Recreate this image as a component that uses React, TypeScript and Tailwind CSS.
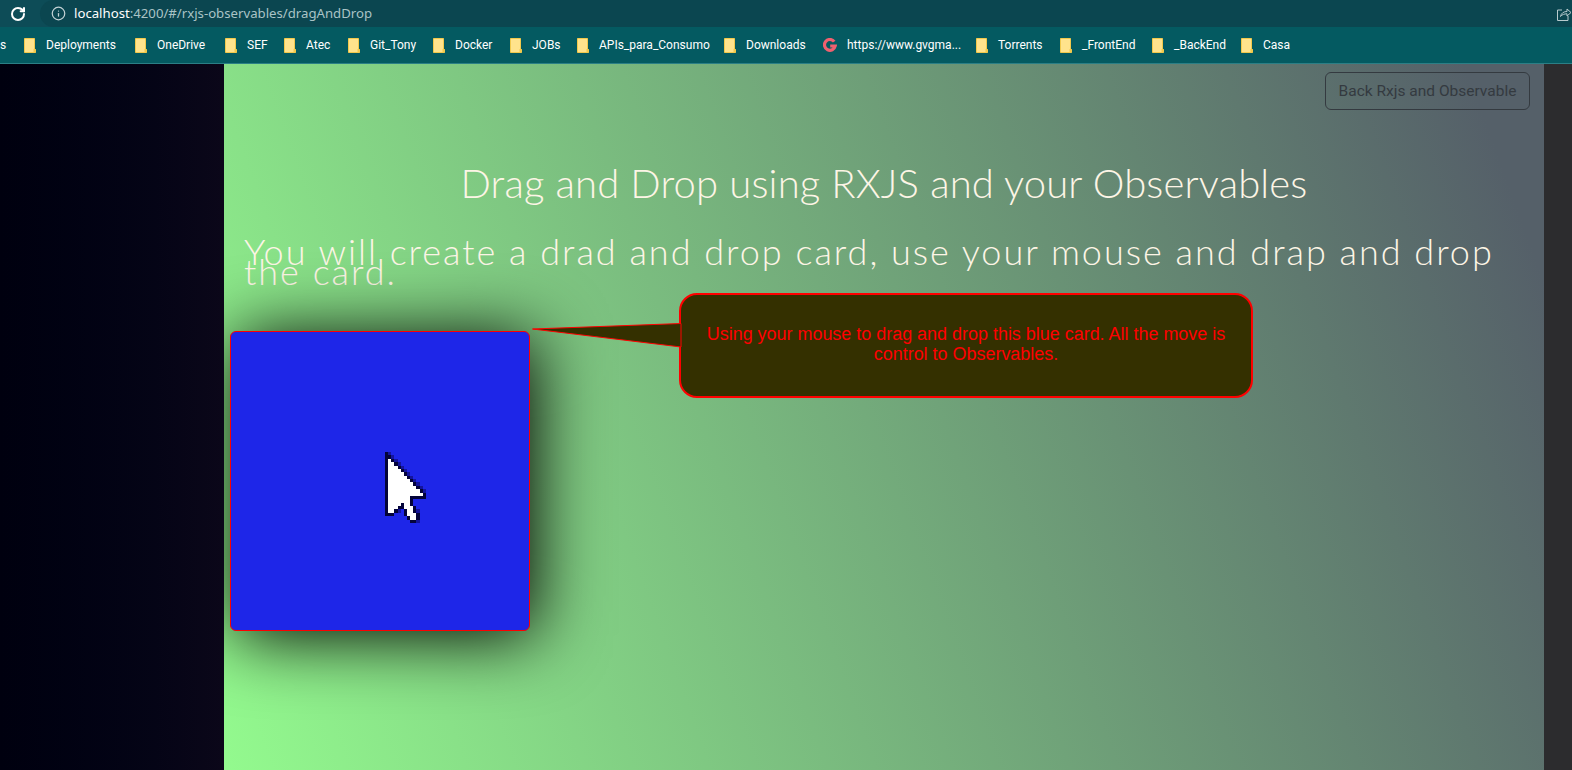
import React from "react";
import { RotateCw, Info } from "lucide-react";

const marks = [
  { t: "Deployments", c: "w-[111px]" },
  { t: "OneDrive", c: "w-[90px]" },
  { t: "SEF", c: "w-[59px]" },
  { t: "Atec", c: "w-[64px]" },
  { t: "Git_Tony", c: "w-[85px]" },
  { t: "Docker", c: "w-[77px]" },
  { t: "JOBs", c: "w-[67px]" },
  { t: "APIs_para_Consumo", c: "w-[147px]" },
  { t: "Downloads", c: "w-[99px]" },
  { t: "https://www.gvgma...", c: "w-[153px]", g: true },
  { t: "Torrents", c: "w-[84px]" },
  { t: "_FrontEnd", c: "w-[92px]" },
  { t: "_BackEnd", c: "w-[89px]" },
  { t: "Casa", c: "w-[60px]" },
];

function Folder() {
  return (
    <svg width="12" height="15" viewBox="0 0 12 15" className="shrink-0">
      <path d="M0.5 0.5H10.5V11.5L11.5 11.5V14.5H0.5Z" fill="#ffe38c" stroke="#f2c94c" />
      <rect x="9.5" y="11" width="2" height="3.5" fill="#f2c94c" />
    </svg>
  );
}

function GLogo() {
  return (
    <svg width="14" height="15" viewBox="0 0 14 15" fill="none" stroke="#f0606f" strokeWidth="3.2" className="shrink-0">
      <path d="M11.2 3.6A5.4 5.4 0 1 0 12.2 8H7.2" />
    </svg>
  );
}

// Each row of the pixel cursor: [column, width, colour]
const D = "#04043a";
const M = "#14149a";
const W = "#ffffff";
function cursorRows(): [number, number, number, string][] {
  const out: [number, number, number, string][] = [];
  const push = (r: number, c: number, w: number, col: string) => out.push([c, r, w, col]);
  push(0, 0, 1, D); push(0, 1, 1, M);
  push(1, 0, 2, D); push(1, 2, 1, M);
  for (let r = 2; r <= 11; r++) {
    push(r, 0, 1, D);
    push(r, 1, r - 1, W);
    push(r, r, 1, D);
    push(r, r + 1, 1, M);
  }
  push(12, 0, 1, D); push(12, 1, 11, W); push(12, 12, 1, D);
  push(13, 0, 1, D); push(13, 1, 7, W); push(13, 8, 5, D);
  push(14, 0, 1, D); push(14, 1, 7, W); push(14, 8, 1, D);
  push(15, 0, 1, D); push(15, 1, 4, W); push(15, 5, 1, D); push(15, 6, 2, W); push(15, 8, 1, D);
  push(16, 0, 1, D); push(16, 1, 3, W); push(16, 4, 2, D); push(16, 6, 3, W); push(16, 9, 1, D);
  push(17, 0, 1, D); push(17, 1, 2, W); push(17, 3, 1, D); push(17, 4, 1, M); push(17, 6, 1, D); push(17, 7, 2, W); push(17, 9, 1, D); push(17, 10, 1, M);
  push(18, 0, 3, D); push(18, 6, 1, D); push(18, 7, 3, W); push(18, 10, 1, D);
  push(19, 7, 1, D); push(19, 8, 2, W); push(19, 10, 1, D);
  push(20, 8, 2, D); push(20, 10, 1, M);
  return out;
}

function Cursor() {
  return (
    <svg viewBox="0 0 14 21" width="44" height="71" preserveAspectRatio="none" shapeRendering="crispEdges" className="absolute left-[154px] top-[120px]">
      {cursorRows().map(([x, y, w, f], i) => (
        <rect key={i} x={x} y={y} width={w} height={1} fill={f} />
      ))}
    </svg>
  );
}

export default function App() {
  return (
    <div className="h-[770px] w-[1572px] overflow-hidden flex flex-col bg-[#2c2c2e] font-['Liberation_Sans',sans-serif]">
      {/* address bar */}
      <div className="h-[27px] bg-[#0d4c57] flex items-center shrink-0">
        <div className="w-[40px] flex justify-center pr-[5px]">
          <RotateCw size={16} strokeWidth={3} color="#ffffff" />
        </div>
        <div className="flex-1 h-[27px] rounded-l-[14px] bg-[#0b4650] flex items-center pl-[11px]">
          <Info size={15} strokeWidth={2} color="#c3d2d5" />
          <div className="ml-[8px] text-[13.2px] font-['Noto_Sans',sans-serif] text-[#a9c3c6] leading-none">
            <span className="text-white">localhost</span>:4200/#/rxjs-observables/dragAndDrop
          </div>
          <div className="flex-1" />
          <svg width="14" height="14" viewBox="0 0 14 14" fill="none" stroke="#b8cbce" strokeWidth="1" className="mr-[1px]">
            <path d="M5 3H0.5V13.5H11V9" />
            <path d="M3.5 9.5C4 6 7 4.5 10 4.5V2L14 5.5L10 9V6.8C7.5 6.8 5 7.5 3.5 9.5Z" />
          </svg>
        </div>
      </div>
      {/* bookmarks */}
      <div className="h-[37px] bg-[#045a61] border-b border-[#2b7f86] flex items-center shrink-0 text-white text-[12px] font-['Roboto',sans-serif] overflow-hidden">
        <div className="w-[24px] shrink-0">s</div>
        {marks.map((m) => (
          <div key={m.t} className={`${m.c} shrink-0 flex items-center gap-[10px]`}>
            {m.g ? <GLogo /> : <Folder />}
            <span className="whitespace-nowrap">{m.t}</span>
          </div>
        ))}
      </div>
      {/* page */}
      <div className="flex-1 flex min-h-0">
        <div className="w-[224px] shrink-0 bg-gradient-to-r from-[#00000f] to-[#0b0719]" />
        <main className="w-[1320px] shrink-0 bg-[linear-gradient(70deg,#93fa8e_0%,#556069_95%)] overflow-hidden">
          <div className="flex justify-end pt-[8px] pr-[14px]">
            <div className="w-[205px] h-[38px] pt-[2px] border border-[#343a40] rounded-[6px] flex items-center justify-center text-[15.5px] text-[#343a40] font-['Roboto',sans-serif]">
              Back Rxjs and Observable
            </div>
          </div>
          <h1 className="mt-[49px] text-center text-[40px] leading-[48px] font-light text-[#fdf5e6] font-['Lato',sans-serif] tracking-[0.15px]">
            Drag and Drop using RXJS and your Observables
          </h1>
          <p className="mt-[34px] ml-[20px] mr-[40px] text-[36px] leading-[20px] font-light text-[#fdf5e6] font-['Lato',sans-serif] tracking-[1.99px]">
            You will create a drad and drop card, use your mouse and drap and drop the card.
          </p>
          <div className="flex items-start mt-[12px] pl-[6px]">
            <div className="relative mt-[38px] w-[300px] h-[300px] shrink-0 bg-[#1e26e8] border border-[#ff0000] rounded-[6px] shadow-[5px_5px_70px_#000]">
              <Cursor />
            </div>
            <div className="relative ml-[149px] w-[574px] h-[105px] shrink-0 bg-[#343000] border-2 border-[#ff0000] rounded-[18px] flex items-center justify-center px-[20px] pb-[3px] text-center text-[17.95px] leading-[20px] text-[#ff0000]">
              <svg width="150" height="26" viewBox="0 0 150 26" className="absolute left-[-149px] top-[28px]">
                <path d="M0.5 6L149 0.5V24Z" fill="#343000" stroke="#ff0000" strokeWidth="1" />
              </svg>
              Using your mouse to drag and drop this blue card. All the move is control to Observables.
            </div>
          </div>
        </main>
      </div>
    </div>
  );
}
